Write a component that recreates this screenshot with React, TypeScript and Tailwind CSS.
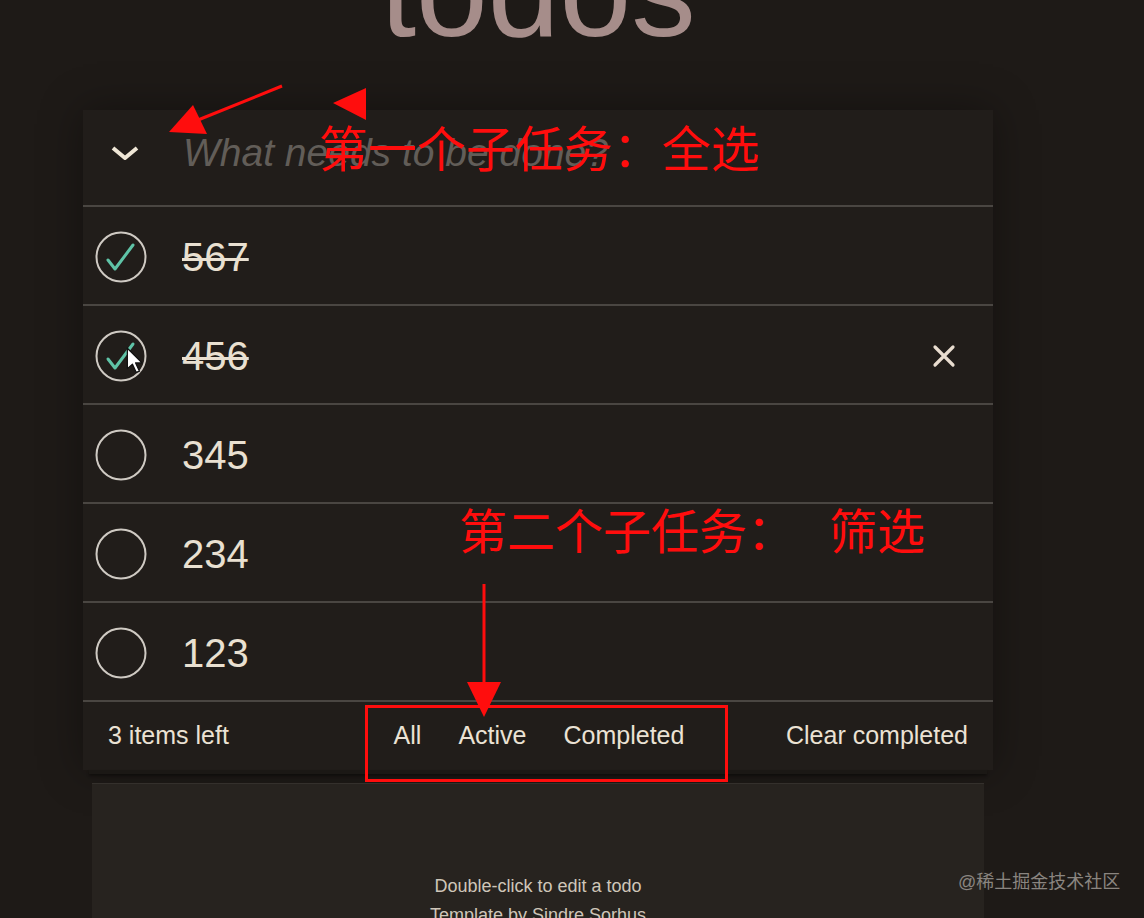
import { useState } from 'react';

type Todo = { id: number; title: string; completed: boolean };

const initialTodos: Todo[] = [
  { id: 5, title: '567', completed: true },
  { id: 4, title: '456', completed: true },
  { id: 3, title: '345', completed: false },
  { id: 2, title: '234', completed: false },
  { id: 1, title: '123', completed: false },
];

function Toggle({ checked }: { checked: boolean }) {
  return (
    <svg width="52" height="52" viewBox="0 0 52 52" className="shrink-0">
      <circle cx="26" cy="26" r="24.5" fill="none" stroke="#cfcac3" strokeWidth="2" />
      {checked && (
        <polyline
          points="13,29 20,38 38,14"
          fill="none"
          stroke="#5fc3a7"
          strokeWidth="3"
          strokeLinecap="round"
          strokeLinejoin="round"
        />
      )}
    </svg>
  );
}

function TodoRow({ todo, hovered }: { todo: Todo; hovered: boolean }) {
  return (
    <li className="flex h-[99px] items-center border-b-2 border-[#4a4642] pl-[12px] pr-[36px] pt-[2px]">
      <Toggle checked={todo.completed} />
      <span
        className={`ml-[35px] flex-1 text-[40px] leading-none text-[#e9e0d1] ${
          todo.completed ? 'line-through decoration-[3px]' : ''
        }`}
      >
        {todo.title}
      </span>
      {hovered && (
        <svg width="26" height="26" viewBox="0 0 26 26">
          <path d="M4 4 L22 22 M22 4 L4 22" stroke="#e9ddd0" strokeWidth="3.2" strokeLinecap="round" />
        </svg>
      )}
    </li>
  );
}

export default function App() {
  const [todos] = useState(initialTodos);
  const left = todos.filter((t) => !t.completed).length;

  return (
    <div
      className="relative h-[918px] w-full overflow-hidden bg-[#1e1a17] text-[#e9e0d1]"
      style={{ fontFamily: '"Liberation Sans", Arial, sans-serif' }}
    >
      <div className="ml-[83px] w-[910px]">
        <h1 className="-mt-[73px] h-[128px] text-center text-[129px] leading-[128px] text-[#a68d8a]">
          todos
        </h1>

        <section className="mt-[55px] bg-[#211d1a] shadow-[0_0_40px_rgba(0,0,0,0.35)]">
          <header className="flex h-[97px] items-center border-b-2 border-[#4a4642] pb-[10px]">
            <div className="flex w-[100px] justify-center pr-[17px]">
              <svg width="30" height="18" viewBox="0 0 30 18">
                <polyline
                  points="3,4 15,14 27,4"
                  fill="none"
                  stroke="#efe6d6"
                  strokeWidth="4"
                  strokeLinejoin="round"
                />
              </svg>
            </div>
            <input
              className="h-full flex-1 bg-transparent text-[39px] italic text-[#e9e0d1] outline-none placeholder:text-[#625d58]"
              placeholder="What needs to be done?"
            />
          </header>

          <ul>
            {todos.map((todo) => (
              <TodoRow key={todo.id} todo={todo} hovered={todo.id === 4} />
            ))}
          </ul>

          <footer className="grid h-[68px] grid-cols-[1fr_auto_1fr] items-center px-[25px] text-[25px] text-[#ebe2d4]">
            <span>{left} items left</span>
            <div className="flex gap-[37px] pl-[2px]">
              <span>All</span>
              <span>Active</span>
              <span>Completed</span>
            </div>
            <span className="text-right">Clear completed</span>
          </footer>
        </section>

        <div className="mx-[6px] h-[4px] bg-[#1b1815] shadow-[0_2px_3px_rgba(0,0,0,0.4)]" />
        <div className="mx-[9px] mt-[9px] h-[200px] border-t border-[#34302c] bg-[#27231f] pt-[92px] text-center text-[18px] text-[#cfc6b9]">
          <p className="leading-[20px]">Double-click to edit a todo</p>
          <p className="mt-[9px] leading-[20px]">Template by Sindre Sorhus</p>
        </div>
      </div>

      {/* mouse pointer */}
      <svg className="pointer-events-none absolute left-[126px] top-[347px]" width="18" height="28" viewBox="0 0 14 22">
        <path d="M1 1 L1 17 L5 13.5 L8 20 L10.5 19 L7.5 12.5 L12.5 12.5 Z" fill="#fff" stroke="#111" strokeWidth="1" strokeLinejoin="round" />
      </svg>

      {/* annotations */}
      <svg className="pointer-events-none absolute inset-0" width="1144" height="918">
        <line x1="282" y1="86" x2="198" y2="120" stroke="#ff0d0d" strokeWidth="3" />
        <polygon points="169,132 207,134 193,105" fill="#ff0d0d" />
        <polygon points="333,103 366,88 366,120" fill="#ff0d0d" />
        <line x1="484" y1="584" x2="484" y2="690" stroke="#ff0d0d" strokeWidth="3" />
        <polygon points="467,682 501,682 484,717" fill="#ff0d0d" />
        <rect x="366.5" y="706.5" width="360" height="74" fill="none" stroke="#ff0d0d" strokeWidth="3" />
      </svg>

      <div
        className="pointer-events-none absolute left-[319px] top-[121px] text-[49px] leading-[49px] text-[#ff0d0d]"
        style={{ fontFamily: '"Noto Sans CJK SC", sans-serif' }}
      >
        第一个子任务：全选
      </div>
      <div
        className="pointer-events-none absolute left-[459px] top-[504px] flex text-[48px] leading-[48px] text-[#ff0d0d]"
        style={{ fontFamily: '"Noto Sans CJK SC", sans-serif' }}
      >
        <span>第二个子任务：</span>
        <span className="ml-[34px]">筛选</span>
      </div>

      <div
        className="pointer-events-none absolute left-[958px] top-[871px] text-[18px] leading-[22px] text-[#8a8580]"
        style={{ fontFamily: '"Liberation Sans", "Noto Sans CJK SC", sans-serif' }}
      >
        @稀土掘金技术社区
      </div>
    </div>
  );
}
